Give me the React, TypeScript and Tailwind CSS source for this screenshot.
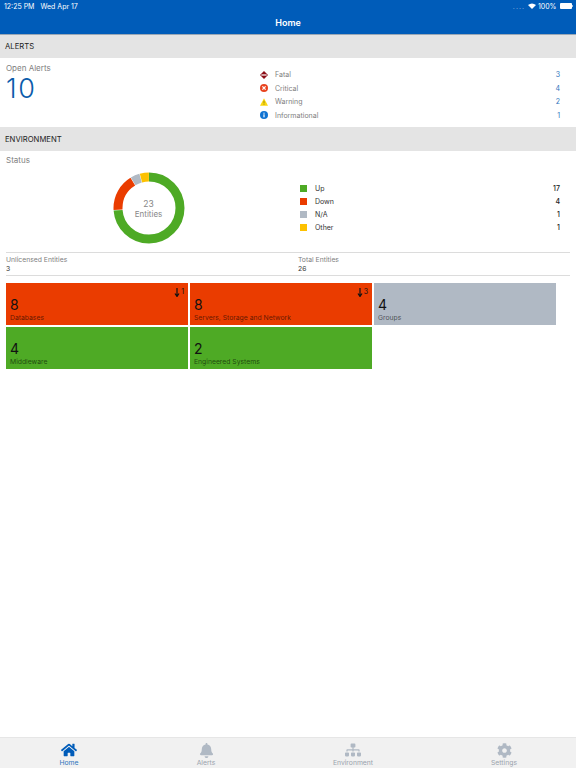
import { FaHome, FaBell, FaSitemap, FaCog } from "react-icons/fa";

const font = { fontFamily: "Inter, 'Noto Sans', sans-serif" };

function Donut() {
  const r = 31;
  const c = 2 * Math.PI * r;
  const segs = [
    { v: 17, col: "#4eaa25" },
    { v: 4, col: "#ea3c00" },
    { v: 1, col: "#b0b9c4" },
    { v: 1, col: "#fdc100" },
  ];
  let acc = 0;
  return (
    <svg width="72" height="72" viewBox="0 0 72 72" className="block">
      <g transform="rotate(-90 36 36)">
        {segs.map((s, i) => {
          const len = (s.v / 23) * c;
          const el = (
            <circle
              key={i}
              cx="36"
              cy="36"
              r={r}
              fill="none"
              stroke={s.col}
              strokeWidth="9"
              strokeDasharray={`${len - 0.4} ${c - len + 0.4}`}
              strokeDashoffset={-acc}
            />
          );
          acc += len;
          return el;
        })}
      </g>
    </svg>
  );
}

const FatalIcon = () => (
  <svg width="8" height="8" viewBox="0 0 8 8">
    <path d="M4 0 L8 4 L4 8 L0 4 Z" fill="#8c0d16" />
    <rect x="1.3" y="3.4" width="5.4" height="1.2" fill="#fff" />
  </svg>
);
const CriticalIcon = () => (
  <svg width="8" height="8" viewBox="0 0 8 8">
    <circle cx="4" cy="4" r="4" fill="#e8431f" />
    <path d="M2.4 2.4 L5.6 5.6 M5.6 2.4 L2.4 5.6" stroke="#fff" strokeWidth="1.3" />
  </svg>
);
const WarningIcon = () => (
  <svg width="8" height="8" viewBox="0 0 8 8">
    <path d="M4 0.3 L8 7.7 L0 7.7 Z" fill="#fbd711" />
    <rect x="3.6" y="2.8" width="0.8" height="2.6" fill="#8a7a10" />
    <rect x="3.6" y="5.9" width="0.8" height="0.8" fill="#8a7a10" />
  </svg>
);
const InfoIcon = () => (
  <svg width="8" height="8" viewBox="0 0 8 8">
    <circle cx="4" cy="4" r="4" fill="#0f73d2" />
    <rect x="3.4" y="3.3" width="1.2" height="3" fill="#fff" />
    <rect x="3.4" y="1.7" width="1.2" height="1" fill="#fff" />
  </svg>
);

const alerts = [
  { icon: <FatalIcon />, label: "Fatal", value: 3 },
  { icon: <CriticalIcon />, label: "Critical", value: 4 },
  { icon: <WarningIcon />, label: "Warning", value: 2 },
  { icon: <InfoIcon />, label: "Informational", value: 1 },
];

const legend = [
  { col: "bg-[#4eaa25]", label: "Up", value: 17 },
  { col: "bg-[#ea3c00]", label: "Down", value: 4 },
  { col: "bg-[#b0b9c4]", label: "N/A", value: 1 },
  { col: "bg-[#fdc100]", label: "Other", value: 1 },
];

const tiles = [
  { n: 8, label: "Databases", bg: "bg-[#ea3c00]", down: 1 },
  { n: 8, label: "Servers, Storage and Network", bg: "bg-[#ea3c00]", down: 3 },
  { n: 4, label: "Groups", bg: "bg-[#b0b9c4]" },
  { n: 4, label: "Middleware", bg: "bg-[#4eaa25]" },
  { n: 2, label: "Engineered Systems", bg: "bg-[#4eaa25]" },
];

const nav = [
  { icon: <FaHome size={16} />, label: "Home", active: true },
  { icon: <FaBell size={15} />, label: "Alerts" },
  { icon: <FaSitemap size={16} />, label: "Environment" },
  { icon: <FaCog size={15} />, label: "Settings" },
];

function SectionHeader({ children, tall }: { children: string; tall?: boolean }) {
  return (
    <div
      className={`${tall ? "h-[24px] pt-[1px]" : "h-[23px]"} bg-[#e4e4e4] flex items-center pl-[5px] text-[7.7px] text-[#222] leading-none shrink-0`}
    >
      {children}
    </div>
  );
}

export default function App() {
  return (
    <div className="w-[576px] h-[768px] bg-white flex flex-col overflow-hidden" style={font}>
      <header className="h-[35px] bg-[#005cb9] border-b border-[#9aa7b5] text-white shrink-0">
        <div className="h-[12px] flex items-center justify-between pl-[4px] pr-[3px] text-[7px] leading-none">
          <div className="flex gap-[6px]">
            <span>12:25 PM</span>
            <span>Wed Apr 17</span>
          </div>
          <div className="flex items-center">
            <span className="text-[#7fa9da] text-[7px] tracking-[1px] mr-[3px]">....</span>
            <svg width="8" height="6" viewBox="0 0 8 6">
              <path d="M0 2 Q4 -1 8 2 L4 6 Z" fill="#fff" />
            </svg>
            <span className="ml-[2px]">100%</span>
            <span className="ml-[3px] w-[12px] h-[6px] rounded-[1px] bg-white" />
            <span className="ml-[0.5px] w-[1px] h-[2px] bg-[#9fc0e6]" />
          </div>
        </div>
        <div className="h-[22px] flex items-center justify-center text-[9px] font-semibold leading-none pb-[2px]">
          Home
        </div>
      </header>

      <SectionHeader>ALERTS</SectionHeader>

      <section className="h-[69px] flex shrink-0">
        <div className="w-[260px] pl-[6px] pt-[5px]">
          <div className="text-[8px] text-[#808080] leading-[11px]">Open Alerts</div>
          <div className="text-[27px] font-light tracking-[1.5px] text-[#0b5cab] leading-[34px] -mt-[2px]">10</div>
        </div>
        <div className="flex-1 pr-[16px] pt-[10px] flex flex-col">
          {alerts.map((a) => (
            <div key={a.label} className="h-[13.5px] flex items-center text-[7px] leading-none">
              <span className="w-[15px] flex justify-start">{a.icon}</span>
              <span className="text-[#808080] flex-1">{a.label}</span>
              <span className="text-[#2f75bd]">{a.value}</span>
            </div>
          ))}
        </div>
      </section>

      <SectionHeader tall>ENVIRONMENT</SectionHeader>

      <section className="shrink-0 h-[101px]">
        <div className="pl-[6px] pt-[4px] text-[8px] text-[#808080] leading-[11px]">Status</div>
        <div className="flex">
          <div className="w-[300px] pl-[112.5px] mt-[6px]">
            <div className="relative w-[72px] h-[72px]">
              <Donut />
              <div className="absolute inset-0 flex flex-col items-center justify-center text-[#888] text-[8px] leading-[10px] pt-[2px]">
                <span className="text-[8.5px]">23</span>
                <span>Entities</span>
              </div>
            </div>
          </div>
          <div className="flex-1 pr-[16px] pt-[16px]">
            {legend.map((l) => (
              <div key={l.label} className="h-[13px] flex items-center text-[7px] leading-none">
                <span className={`w-[7px] h-[7px] ${l.col} mr-[8px]`} />
                <span className="flex-1 text-[#333]">{l.label}</span>
                <span className="text-[#222] font-medium">{l.value}</span>
              </div>
            ))}
          </div>
        </div>
      </section>

      <div className="mx-[6px] w-[564px] h-[24px] border-y border-[#dcdcdc] flex text-[6.8px] leading-[9px] shrink-0 pt-[2px]">
        <div className="w-[292px]">
          <div className="text-[#808080]">Unlicensed Entities</div>
          <div className="text-[#333]">3</div>
        </div>
        <div>
          <div className="text-[#808080]">Total Entities</div>
          <div className="text-[#333]">26</div>
        </div>
      </div>

      <div className="grid grid-cols-[182px_182px_182px] auto-rows-[42px] gap-[2px] pl-[6px] pt-[7px] shrink-0">
        {tiles.map((t) => (
          <div key={t.label} className={`${t.bg} relative flex flex-col justify-end pl-[4px] pb-[3px]`}>
            {t.down !== undefined && (
              <div className="absolute top-[5px] right-[4px] flex items-start text-[7px] leading-none text-[#111]">
                <svg width="6" height="9" viewBox="0 0 6 9" className="mr-[1px]">
                  <path d="M3 0 V8 M1 5.5 L3 8.5 L5 5.5" stroke="#111" strokeWidth="1.2" fill="none" />
                </svg>
                {t.down}
              </div>
            )}
            <div className="text-[14px] leading-[14px] mb-[1px] text-[#111]">{t.n}</div>
            <div className="text-[6.8px] leading-[9px] text-black/60">{t.label}</div>
          </div>
        ))}
      </div>

      <div className="flex-1" />

      <nav className="h-[31px] bg-[#f1f1f1] border-t border-[#e6e6e6] grid grid-cols-[138px_136px_158px_144px] shrink-0">
        {nav.map((n) => (
          <div
            key={n.label}
            className={`flex flex-col items-center justify-end ${n.active ? "text-[#005cb9]" : "text-[#b0b9c4]"}`}
          >
            <div className="h-[16px] flex items-center justify-center">{n.icon}</div>
            <div className={`text-[6.8px] leading-[10px] ${n.active ? "text-[#2f75bd]" : "text-[#9aa3ad]"}`}>{n.label}</div>
          </div>
        ))}
      </nav>
    </div>
  );
}
